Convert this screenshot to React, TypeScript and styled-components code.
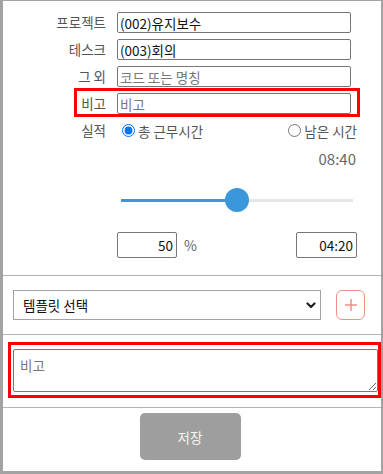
import styled, { createGlobalStyle } from 'styled-components';

const GlobalStyle = createGlobalStyle`
  html, body {
    margin: 0;
    padding: 0;
    background: #fff;
  }
  body {
    font-family: "Noto Sans CJK KR", "Noto Sans", sans-serif;
    color: #222;
  }
  * {
    box-sizing: border-box;
  }
`;

const rows = [
  { label: '프로젝트', value: '(002)유지보수', placeholder: '' },
  { label: '테스크', value: '(003)회의', placeholder: '' },
  { label: '그 외', value: '', placeholder: '코드 또는 명칭' },
  { label: '비고', value: '', placeholder: '비고', highlight: true },
];

const App: React.FC = () => {
  return (
    <>
      <GlobalStyle />
      <Frame>
        <FormSection>
          {rows.map((row) => (
            <Row key={row.label} $highlight={row.highlight}>
              <Label>{row.label}</Label>
              <TextInput
                type="text"
                defaultValue={row.value}
                placeholder={row.placeholder}
              />
            </Row>
          ))}
          <Row>
            <Label>실적</Label>
            <RadioGroup>
              <RadioLabel>
                <input type="radio" name="mode" defaultChecked />
                총 근무시간
              </RadioLabel>
              <RadioLabel>
                <input type="radio" name="mode" />
                남은 시간
              </RadioLabel>
            </RadioGroup>
          </Row>
          <RightColumn>
            <TotalTime>08:40</TotalTime>
            <Slider type="range" min={0} max={100} defaultValue={50} />
            <ValueRow>
              <PercentGroup>
                <NumberBox type="text" defaultValue="50" $width={60} />
                <Unit>%</Unit>
              </PercentGroup>
              <NumberBox type="text" defaultValue="04:20" $width={61} />
            </ValueRow>
          </RightColumn>
        </FormSection>

        <TemplateSection>
          <SelectWrap>
            <TemplateSelect defaultValue="">
              <option value="">템플릿 선택</option>
            </TemplateSelect>
            <Chevron width="10" height="7" viewBox="0 0 10 7">
              <polyline
                points="1.5,1.5 5,5 8.5,1.5"
                fill="none"
                stroke="#222"
                strokeWidth="2.2"
                strokeLinecap="round"
                strokeLinejoin="round"
              />
            </Chevron>
          </SelectWrap>
          <AddButton type="button" aria-label="add">
            <svg width="14" height="14" viewBox="0 0 14 14">
              <line x1="7" y1="1" x2="7" y2="13" stroke="#f0877c" strokeWidth="1.4" />
              <line x1="1" y1="7" x2="13" y2="7" stroke="#f0877c" strokeWidth="1.4" />
            </svg>
          </AddButton>
        </TemplateSection>

        <NoteSection>
          <NoteBox>
            <NoteArea placeholder="비고" />
          </NoteBox>
        </NoteSection>

        <FooterSection>
          <SaveButton type="button">저장</SaveButton>
        </FooterSection>
      </Frame>
    </>
  );
};

const Frame = styled.div`
  width: 383px;
  height: 474px;
  border: 3px solid #a3a3a3;
  border-top-width: 1px;
  border-right-width: 2px;
  background: #fff;
  display: flex;
  flex-direction: column;
`;

const FormSection = styled.div`
  padding: 11px 0 17px;
  border-bottom: 1px solid #b4b4b4;
  display: flex;
  flex-direction: column;
  gap: 6px;
`;

const Row = styled.div<{ $highlight?: boolean }>`
  position: relative;
  display: flex;
  align-items: center;
  height: 21px;

  ${({ $highlight }) =>
    $highlight &&
    `
    &::after {
      content: '';
      position: absolute;
      top: -5px;
      bottom: -3px;
      left: 71px;
      right: 21px;
      border: 3px solid #ff0000;
      pointer-events: none;
    }
  `}
`;

const Label = styled.label`
  width: 103px;
  margin-right: 11px;
  text-align: right;
  font-size: 13.5px;
  line-height: 21px;
  color: #555;
  white-space: nowrap;
`;

const TextInput = styled.input`
  width: 234px;
  height: 21px;
  padding: 0 2px;
  border: 1px solid #767676;
  border-radius: 2px;
  font-family: inherit;
  font-size: 13.5px;
  color: #111;
  outline: none;

  &::placeholder {
    color: #777;
  }
`;

const RadioGroup = styled.div`
  width: 240px;
  display: flex;
  justify-content: space-between;
  align-items: center;
`;

const RadioLabel = styled.label`
  display: flex;
  align-items: center;
  font-size: 13.5px;
  color: #555;
  white-space: nowrap;

  input {
    margin: 0 3px 0 5px;
    width: 13px;
    height: 13px;
  }
`;

const RightColumn = styled.div`
  margin-left: 114px;
  width: 240px;
  display: flex;
  flex-direction: column;
`;

const TotalTime = styled.div`
  margin-top: 2px;
  text-align: right;
  font-size: 15px;
  line-height: 20px;
  color: #666;
  padding-right: 1px;
`;

const Slider = styled.input`
  -webkit-appearance: none;
  appearance: none;
  width: 232px;
  height: 24px;
  margin: 19px 0 0 4px;
  background: transparent;

  &::-webkit-slider-runnable-track {
    height: 3px;
    background: linear-gradient(to right, #3a97d9 52%, #e6e6e6 52%);
  }

  &::-webkit-slider-thumb {
    -webkit-appearance: none;
    width: 24px;
    height: 24px;
    margin-top: -10.5px;
    border-radius: 50%;
    background: #3a97d9;
    border: none;
  }
`;

const ValueRow = styled.div`
  margin-top: 20px;
  display: flex;
  justify-content: space-between;
  align-items: center;
`;

const PercentGroup = styled.div`
  display: flex;
  align-items: center;
`;

const NumberBox = styled.input<{ $width: number }>`
  width: ${({ $width }) => $width}px;
  height: 26px;
  padding: 0 3px;
  border: 1px solid #767676;
  border-radius: 2px;
  text-align: right;
  font-family: inherit;
  font-size: 13.5px;
  color: #111;
  outline: none;
`;

const Unit = styled.span`
  margin-left: 7px;
  font-size: 14px;
  color: #666;
`;

const TemplateSection = styled.div`
  padding: 14px 16px 14px 10px;
  border-bottom: 1px solid #b4b4b4;
  display: flex;
  align-items: center;
  gap: 15px;
`;

const SelectWrap = styled.div`
  position: relative;
  flex: 1;
`;

const TemplateSelect = styled.select`
  -webkit-appearance: none;
  appearance: none;
  width: 100%;
  height: 30px;
  padding: 0 24px 0 9px;
  border: 1px solid #a3a3a3;
  border-radius: 0;
  background: #fff;
  font-family: inherit;
  font-size: 13.5px;
  color: #111;
  outline: none;
`;

const Chevron = styled.svg`
  position: absolute;
  right: 5px;
  top: 12px;
  pointer-events: none;
`;

const AddButton = styled.button`
  width: 29px;
  height: 30px;
  padding: 0;
  border: 1px solid #f29084;
  border-radius: 6px;
  background: #fff;
  display: flex;
  align-items: center;
  justify-content: center;
  cursor: pointer;
`;

const NoteSection = styled.div`
  padding: 7px 0 9px 5px;
  border-bottom: 1px solid #b4b4b4;
`;

const NoteBox = styled.div`
  border: 3px solid #ff0000;
  padding: 4px 0 3px 2px;
`;

const NoteArea = styled.textarea`
  display: block;
  width: 100%;
  height: 43px;
  padding: 5px 6px;
  border: 1px solid #767676;
  border-radius: 2px;
  font-family: inherit;
  font-size: 13.5px;
  color: #111;
  resize: vertical;
  outline: none;

  &::placeholder {
    color: #777;
  }
`;

const FooterSection = styled.div`
  padding-top: 5px;
  display: flex;
  justify-content: center;
  padding-right: 4px;
`;

const SaveButton = styled.button`
  width: 101px;
  height: 47px;
  border: none;
  border-radius: 5px;
  background: #9e9e9e;
  color: #f4f4f4;
  font-family: inherit;
  font-size: 13.5px;
  cursor: pointer;
`;

export default App;
